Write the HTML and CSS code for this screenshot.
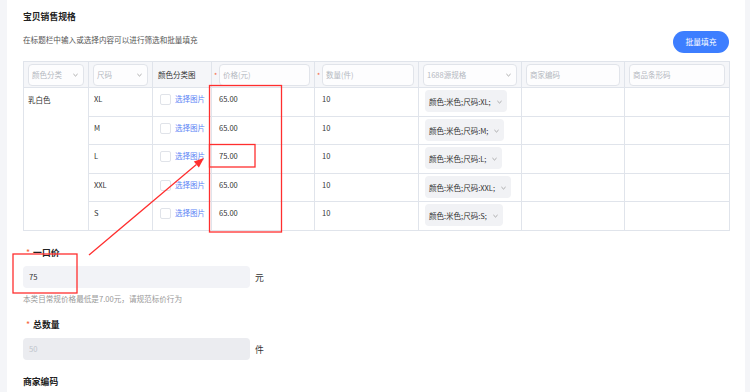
FILE: index.html
```html
<!DOCTYPE html>
<html lang="zh-CN">
<head>
<meta charset="utf-8">
<title>宝贝销售规格</title>
<link rel="stylesheet" href="styles.css">
</head>
<body>
<div class="page">
  <aside class="gutter gutter-left"></aside>
  <main class="main">
    <h2 class="title">宝贝销售规格</h2>
    <div class="toolbar">
      <p class="desc">在标题栏中输入或选择内容可以进行筛选和批量填充</p>
      <button class="btn-fill">批量填充</button>
    </div>
    <table class="sku">
      <colgroup>
        <col class="w65"><col class="w64"><col class="w59"><col class="w103"><col class="w104"><col class="w103"><col class="w103"><col class="w105">
      </colgroup>
      <thead>
        <tr>
          <th><div class="hinput"><span class="ph">颜色分类</span><svg class="chev" viewBox="0 0 6 4"><polyline points="0.5,0.8 3,3.2 5.5,0.8"/></svg></div></th>
          <th><div class="hinput"><span class="ph">尺码</span><svg class="chev" viewBox="0 0 6 4"><polyline points="0.5,0.8 3,3.2 5.5,0.8"/></svg></div></th>
          <th class="htext">颜色分类图</th>
          <th><div class="hreq"><span class="star">*</span><div class="hinput"><span class="ph">价格(元)</span></div></div></th>
          <th><div class="hreq"><span class="star">*</span><div class="hinput"><span class="ph">数量(件)</span></div></div></th>
          <th><div class="hinput"><span class="ph">1688源规格</span><svg class="chev" viewBox="0 0 6 4"><polyline points="0.5,0.8 3,3.2 5.5,0.8"/></svg></div></th>
          <th><div class="hinput"><span class="ph">商家编码</span></div></th>
          <th><div class="hinput"><span class="ph">商品条形码</span></div></th>
        </tr>
      </thead>
      <tbody>
        <tr class="r29">
          <td rowspan="5" class="c-color">乳白色</td>
          <td class="c-size">XL</td>
          <td class="c-img"><span class="pick"><span class="box"></span><a class="link">选择图片</a></span></td>
          <td class="c-num">65.00</td>
          <td class="c-num">10</td>
          <td class="c-tag"><span class="tag">颜色:米色;尺码:XL;<svg class="chev" viewBox="0 0 6 4"><polyline points="0.5,0.8 3,3.2 5.5,0.8"/></svg></span></td>
          <td></td>
          <td></td>
        </tr>
        <tr class="r28">
          <td class="c-size">M</td>
          <td class="c-img"><span class="pick"><span class="box"></span><a class="link">选择图片</a></span></td>
          <td class="c-num">65.00</td>
          <td class="c-num">10</td>
          <td class="c-tag"><span class="tag">颜色:米色;尺码:M;<svg class="chev" viewBox="0 0 6 4"><polyline points="0.5,0.8 3,3.2 5.5,0.8"/></svg></span></td>
          <td></td>
          <td></td>
        </tr>
        <tr class="r29">
          <td class="c-size">L</td>
          <td class="c-img"><span class="pick"><span class="box"></span><a class="link">选择图片</a></span></td>
          <td class="c-num">75.00</td>
          <td class="c-num">10</td>
          <td class="c-tag"><span class="tag">颜色:米色;尺码:L;<svg class="chev" viewBox="0 0 6 4"><polyline points="0.5,0.8 3,3.2 5.5,0.8"/></svg></span></td>
          <td></td>
          <td></td>
        </tr>
        <tr class="r28">
          <td class="c-size">XXL</td>
          <td class="c-img"><span class="pick"><span class="box"></span><a class="link">选择图片</a></span></td>
          <td class="c-num">65.00</td>
          <td class="c-num">10</td>
          <td class="c-tag"><span class="tag">颜色:米色;尺码:XXL;<svg class="chev" viewBox="0 0 6 4"><polyline points="0.5,0.8 3,3.2 5.5,0.8"/></svg></span></td>
          <td></td>
          <td></td>
        </tr>
        <tr class="r29">
          <td class="c-size">S</td>
          <td class="c-img"><span class="pick"><span class="box"></span><a class="link">选择图片</a></span></td>
          <td class="c-num">65.00</td>
          <td class="c-num">10</td>
          <td class="c-tag"><span class="tag">颜色:米色;尺码:S;<svg class="chev" viewBox="0 0 6 4"><polyline points="0.5,0.8 3,3.2 5.5,0.8"/></svg></span></td>
          <td></td>
          <td></td>
        </tr>
      </tbody>
    </table>

    <section class="field field-first">
      <div class="label"><span class="star">*</span>一口价</div>
      <div class="control">
        <div class="input">75</div>
        <span class="unit">元</span>
      </div>
      <div class="help">本类目常规价格最低是7.00元，请规范标价行为</div>
    </section>

    <section class="field field-qty">
      <div class="label"><span class="star">*</span>总数量</div>
      <div class="control">
        <div class="input disabled">50</div>
        <span class="unit">件</span>
      </div>
    </section>

    <section class="field field-code">
      <div class="label">商家编码</div>
    </section>
  </main>
  <aside class="gutter gutter-right"></aside>

  <svg class="annot" viewBox="0 0 750 392" width="750" height="392">
    <rect x="209.5" y="85.5" width="72" height="146.5"/>
    <rect x="209.5" y="144.5" width="45.5" height="22.5"/>
    <rect x="13" y="254" width="64" height="39"/>
    <line x1="89" y1="255" x2="196.4" y2="164.4"/>
    <polygon class="head" points="204,158 198.9,167.5 193.8,161.4"/>
  </svg>
</div>
</body>
</html>
```
FILE: styles.css
```css
* { box-sizing: border-box; }
html, body { margin: 0; padding: 0; }
body {
  font-family: "Noto Sans CJK SC", "Noto Sans", sans-serif;
  color: #333;
  background: #fff;
  overflow: hidden;
}
.page {
  position: relative;
  display: flex;
  width: 750px;
  height: 392px;
  overflow: hidden;
}
.gutter { background: #f4f5f8; flex: none; }
.gutter-left { width: 7px; }
.gutter-right { width: 6px; }
.main {
  flex: 1;
  padding: 11px 15px 0 16px;
  background: #fff;
}
.title {
  margin: 0;
  font-size: 8.8px;
  line-height: 12px;
  font-weight: 700;
  color: #222;
}
.toolbar {
  display: flex;
  justify-content: space-between;
  align-items: flex-start;
  margin-top: 8px;
  margin-bottom: 8px;
  padding-right: 1px;
}
.desc {
  margin: 3px 0 0;
  font-size: 7.6px;
  line-height: 12px;
  color: #555;
}
.btn-fill {
  height: 22px;
  width: 56px;
  padding: 0;
  border: none;
  border-radius: 11px;
  background: #3d7eff;
  color: #fff;
  font-family: inherit;
  font-size: 7.8px;
  line-height: 22px;
}

/* table */
.sku {
  width: 706px;
  table-layout: fixed;
  border-collapse: collapse;
  font-size: 7.5px;
}
.w65 { width: 65px; } .w64 { width: 64px; } .w59 { width: 59px; }
.w103 { width: 103px; } .w104 { width: 104px; } .w105 { width: 105px; }
.sku th, .sku td {
  border: 1px solid #e0e4eb;
  padding: 0;
}
.sku th {
  background: #f5f6f9;
  height: 26px;
  font-weight: 400;
  text-align: left;
  vertical-align: middle;
  padding: 0 4px 0 4px;
}
.sku th.htext { padding-left: 5px; color: #333; }
.hinput {
  flex: 1;
  display: flex;
  align-items: center;
  justify-content: space-between;
  height: 22px;
  border: 1px solid #e1e4ea;
  border-radius: 4px;
  background: #fdfdfe;
  padding: 0 5px 0 3px;
}
.ph { color: #b4b8c0; white-space: nowrap; }
.chev {
  width: 5px;
  height: 4px;
  fill: none;
  stroke: #999;
  stroke-width: 1;
  flex: none;
}
.hreq { display: flex; align-items: center; margin-left: -2px; }
.hreq .star { width: 5px; color: #f5663d; font-size: 7px; line-height: 8px; }

.sku td {
  vertical-align: top;
  padding-top: 5px;
  line-height: 12px;
  color: #333;
}
.sku tr.r29 td { height: 29px; }
.sku tr.r28 td { height: 28px; }
.sku td.c-color { padding-left: 4px; padding-top: 6px; }
.sku td.c-size { padding-left: 5px; }
.sku td.c-img { padding-left: 7px; }
.sku td.c-num { padding-left: 7px; }
.sku td.c-tag { padding-left: 6px; padding-top: 2px; }
.pick { display: flex; align-items: center; gap: 4px; height: 12px; }
.box {
  width: 11px; height: 11px;
  border: 1px solid #e0e3e9;
  border-radius: 2px;
  background: #fff;
}
.link { color: #5b84f5; }
.tag {
  display: inline-flex;
  align-items: center;
  gap: 6px;
  height: 22px;
  padding: 2px 5px 0 4px;
  border-radius: 4px;
  background: #f1f2f5;
  white-space: nowrap;
  color: #333;
}

/* form */
.field-first { margin-top: 16px; }
.field-qty { margin-top: 14px; }
.field-code { margin-top: 16px; }
.label {
  font-size: 8.8px;
  line-height: 12px;
  font-weight: 700;
  color: #222;
}
.label .star {
  color: #f5663d;
  font-weight: 400;
  margin: 0 3px 0 3px;
}
.control {
  display: flex;
  align-items: center;
  gap: 5px;
  margin-top: 7px;
}
.input {
  width: 227px;
  height: 22px;
  line-height: 22px;
  padding-left: 6px;
  border-radius: 4px;
  background: #f2f3f7;
  font-size: 7.6px;
  color: #333;
}
.input.disabled { background: #ebecf0; color: #c0c4cc; }
.unit { font-size: 8.8px; color: #333; }
.help {
  margin-top: 5px;
  font-size: 7.6px;
  line-height: 12px;
  color: #999;
}

/* annotations */
.annot {
  position: absolute;
  left: 0;
  top: 0;
  pointer-events: none;
}
.annot rect, .annot line {
  fill: none;
  stroke: #ff2e2e;
  stroke-width: 1.3;
}
.annot .head { fill: #ff2e2e; stroke: none; }
```
